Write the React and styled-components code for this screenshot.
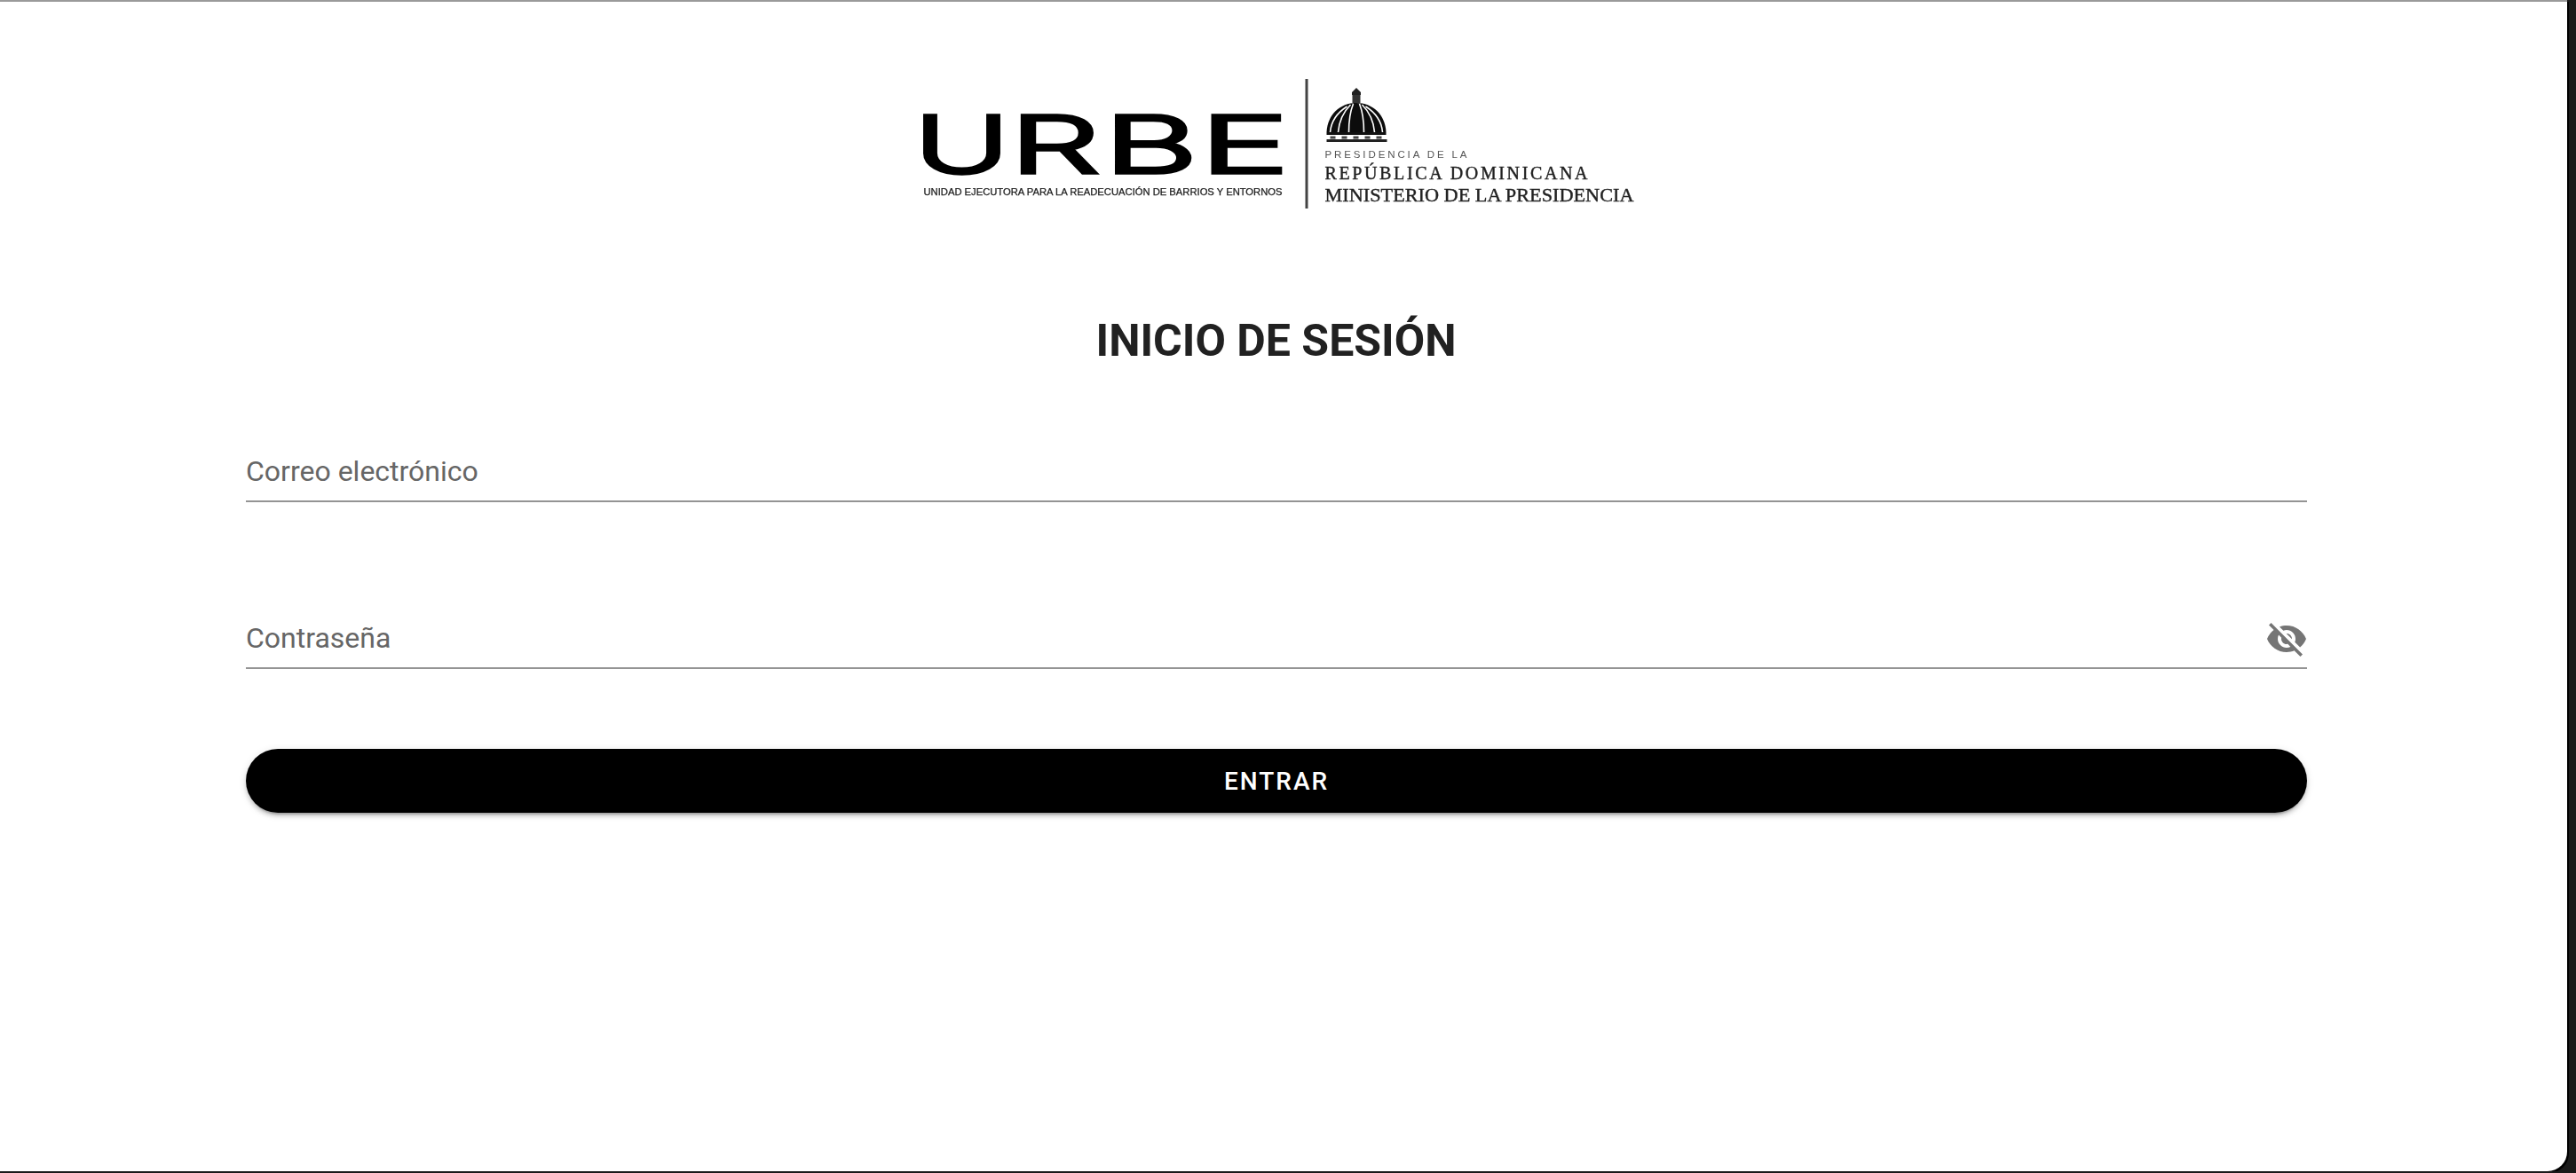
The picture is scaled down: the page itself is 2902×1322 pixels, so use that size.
import React from "react";
import styled, { createGlobalStyle } from "styled-components";
import { MdVisibilityOff } from "react-icons/md";

const GlobalStyle = createGlobalStyle`
  html, body {
    margin: 0;
    padding: 0;
    background: #1a1a1a;
  }
`;

const Window = styled.div`
  width: 2892px;
  height: 1320px;
  box-sizing: border-box;
  padding: 0 17px 0 0;
  background: #fff;
  border-top: 2px solid #9a9a9a;
  border-bottom-right-radius: 22px;
  box-shadow: 2px 2px 0 #000;
  font-family: Roboto, "Liberation Sans", sans-serif;
`;

const Header = styled.header`
  display: flex;
  justify-content: center;
  padding-top: 78px;
`;

const Logo = styled.svg`
  display: block;
  width: 820px;
  height: 160px;
  filter: blur(0.55px);
`;

const Title = styled.h1`
  margin: 108px 0 0;
  font-size: 50px;
  line-height: 72px;
  font-weight: 700;
  color: #212121;
  text-align: center;
`;

const Form = styled.form`
  display: flex;
  flex-direction: column;
  padding: 0 276px 0 277px;
`;

const Field = styled.div`
  display: flex;
  align-items: center;
  justify-content: space-between;
  height: 64px;
  margin-top: ${(p) => p.$top}px;
  border-bottom: 2px solid #949494;
`;

const Label = styled.span`
  margin-bottom: 2px;
  font-size: 32px;
  line-height: 46px;
  color: #666;
`;

const EyeIcon = styled(MdVisibilityOff)`
  width: 48px;
  height: 48px;
  margin-right: -1px;
  color: #757575;
`;

const Submit = styled.button`
  height: 72px;
  margin-top: 90px;
  border: none;
  border-radius: 36px;
  background: #000;
  color: #fff;
  font-family: inherit;
  font-size: 28px;
  font-weight: 500;
  letter-spacing: 2px;
  box-shadow: 0 6px 2px -4px rgba(0, 0, 0, 0.2), 0 4px 4px 0 rgba(0, 0, 0, 0.14),
    0 2px 10px 0 rgba(0, 0, 0, 0.12);
`;

const urbeLetters = [
  { letter: "U", x: 1029, width: 108 },
  { letter: "R", x: 1137, width: 102 },
  { letter: "B", x: 1243, width: 106 },
  { letter: "E", x: 1351, width: 101 },
];

const Dome = () => (
  <g>
    <path d="M1527.500 99l5 5v3h-10v-3z" fill="#222" />
    <rect x="1523" y="107" width="9" height="9" fill="#333" />
    <path d="M1494 149c1-20 15-33 33.500-33s32.500 13 33.500 33z" fill="#0c0c0c" />
    <g fill="none" stroke="#fff" strokeWidth="1.600">
      <path d="M1498 149c1-12 8-22 19-29" />
      <path d="M1507 149c1-12 5-22 14-31" />
      <path d="M1519 149c0-12 1-22 5-32" />
      <path d="M1536 149c0-12-1-22-5-32" />
      <path d="M1548 149c-1-12-5-22-14-31" />
      <path d="M1557 149c-1-12-8-22-19-29" />
    </g>
    <rect x="1494" y="149" width="67" height="3" fill="#111" />
    <path d="M1498 155h62" stroke="#444" strokeWidth="3" strokeDasharray="6 7" fill="none" />
    <rect x="1494" y="157" width="68" height="3" fill="#222" />
  </g>
);

const App = () => {
  return (
    <>
      <GlobalStyle />
      <Window>
        <Header>
          <Logo viewBox="1027.5 80 820 160">
            {urbeLetters.map((item) => (
              <text
                key={item.letter}
                x={item.x}
                y="195"
                textLength={item.width}
                lengthAdjust="spacingAndGlyphs"
                fontFamily="Inter, sans-serif"
                fontSize="90"
                fontWeight="300"
                fill="#000"
                stroke="#000"
                strokeWidth="3.5"
              >
                {item.letter}
              </text>
            ))}
            <text
              x="1040"
              y="220"
              textLength="404"
              lengthAdjust="spacingAndGlyphs"
              fontFamily="'Liberation Sans', sans-serif"
              fontSize="10"
              fill="#222"
              stroke="#222"
              strokeWidth="0.25"
            >
              UNIDAD EJECUTORA PARA LA READECUACIÓN DE BARRIOS Y ENTORNOS
            </text>
            <rect x="1470" y="89" width="3" height="146" fill="#444" />
            <Dome />
            <text
              x="1492"
              y="178"
              textLength="160"
              fontFamily="'Liberation Sans', sans-serif"
              fontSize="11.500"
              fill="#555"
            >
              PRESIDENCIA DE LA
            </text>
            <text
              x="1492"
              y="202"
              textLength="296"
              fontFamily="'Liberation Serif', serif"
              fontSize="20"
              fill="#222"
              stroke="#222"
              strokeWidth="0.4"
            >
              REPÚBLICA DOMINICANA
            </text>
            <text
              x="1492"
              y="227"
              textLength="348"
              lengthAdjust="spacingAndGlyphs"
              fontFamily="'Liberation Serif', serif"
              fontSize="22"
              fill="#222"
              stroke="#222"
              strokeWidth="0.4"
            >
              MINISTERIO DE LA PRESIDENCIA
            </text>
          </Logo>
        </Header>
        <Title>INICIO DE SESIÓN</Title>
        <Form>
          <Field $top={80}>
            <Label>Correo electrónico</Label>
          </Field>
          <Field $top={122}>
            <Label>Contraseña</Label>
            <EyeIcon />
          </Field>
          <Submit type="button">ENTRAR</Submit>
        </Form>
      </Window>
    </>
  );
};

export default App;
